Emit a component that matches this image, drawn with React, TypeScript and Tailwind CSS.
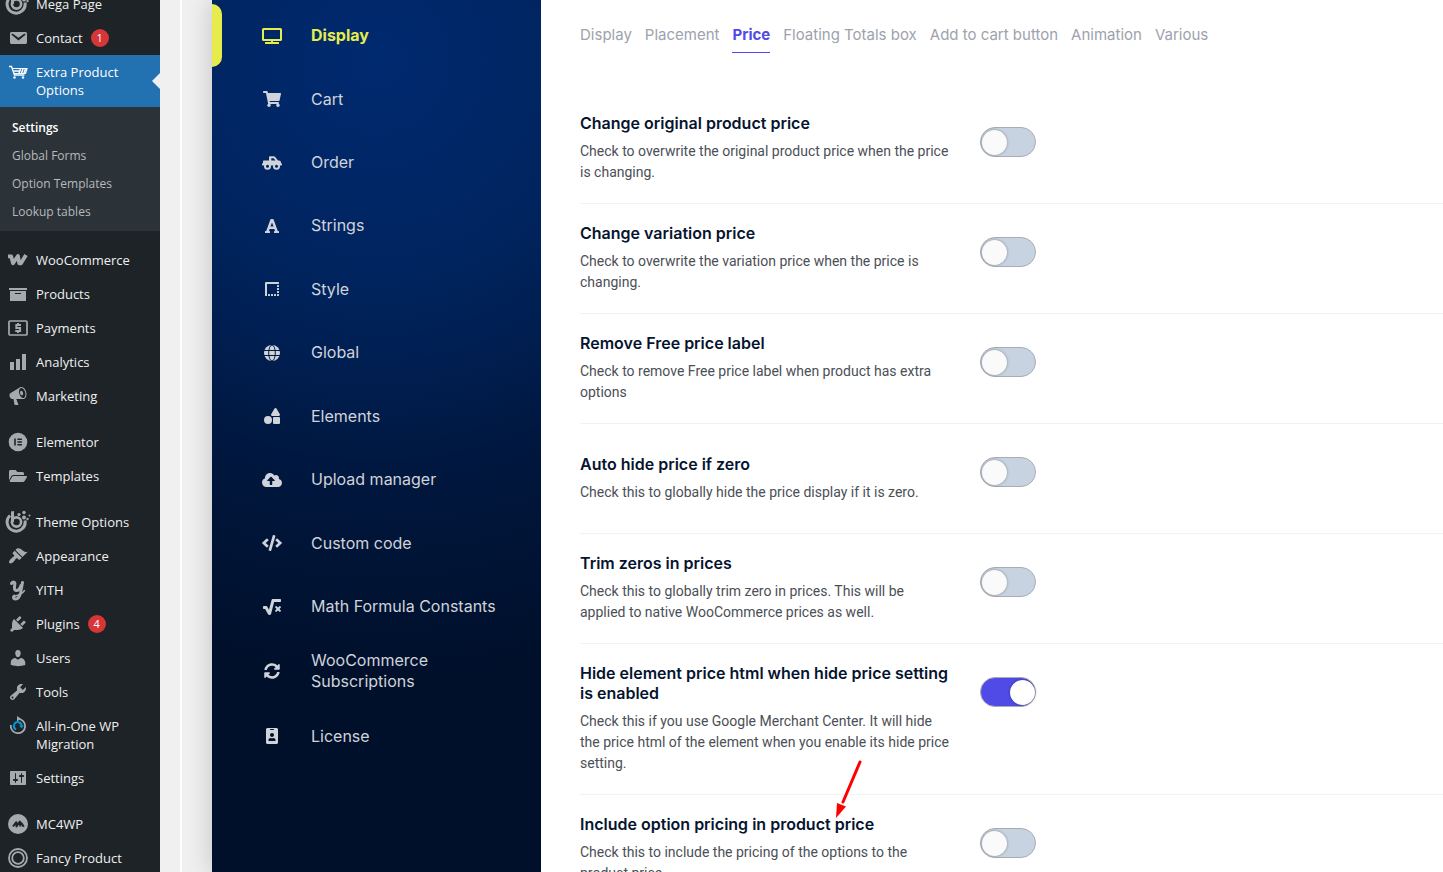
import { useState } from "react";
import type { ReactNode } from "react";
import {
    FaBorderStyle,
    FaCloudUploadAlt,
    FaCode,
    FaFolderOpen,
    FaFont,
    FaIdBadge,
    FaShapes,
    FaShoppingCart,
    FaSquareRootAlt,
    FaSyncAlt,
    FaTv,
} from "react-icons/fa";

// dashicons, 20x20 grid
const dash = {
    email: "M3.87 4h13.25C18.37 4 19 4.59 19 5.79v8.42c0 1.19-.63 1.79-1.88 1.79H3.87c-1.25 0-1.88-.6-1.88-1.79V5.79c0-1.2.63-1.79 1.88-1.79zm6.62 8.6l6.74-5.53c.24-.2.43-.66.13-1.07-.29-.41-.82-.42-1.17-.17l-5.7 3.86L4.8 5.83c-.35-.25-.88-.24-1.17.17-.3.41-.11.87.13 1.07z",
    archive: "M19 4v2H1V4h18zM2 7h16v10H2V7zm11 3V9H7v1h6z",
    chart: "M18 18V2h-4v16h4zm-6 0V7H8v11h4zm-6 0v-8H2v8h4z",
    megaphone: "M18.15 5.94c.46 1.62.38 3.22-.02 4.48-.42 1.28-1.26 2.18-2.3 2.48-.16.06-.26.06-.4.06-.06.02-.12.02-.18.02-.06.02-.14.02-.22.02h-6.8l2.22 5.5c.02.14-.06.26-.14.34-.08.1-.24.16-.34.16H6.95c-.1 0-.26-.06-.34-.16-.08-.08-.16-.2-.14-.34l-1-5.5H4.25l-.02-.02c-.5.06-1.08-.18-1.54-.62s-.88-1.08-1.06-1.88c-.24-.8-.2-1.56-.02-2.2.18-.62.58-1.08 1.06-1.3l.02-.02 9-5.4c.1-.06.18-.1.24-.16.06-.04.14-.08.24-.12.16-.08.28-.12.5-.18 1.04-.3 2.24.1 3.22.98s1.84 2.24 2.26 3.86zm-2.58 5.98h-.02c.4-.1.74-.34 1.04-.7.58-.7.86-1.76.86-3.04 0-.64-.1-1.3-.28-1.98-.34-1.36-1.02-2.5-1.78-3.24s-1.68-1.1-2.46-.88c-.82.22-1.4.96-1.7 2-.32 1.04-.28 2.36.06 3.72.38 1.36 1 2.5 1.8 3.24.78.74 1.62 1.1 2.48.88zm-2.54-7.08c.22-.04.42-.02.62.04.38.16.76.48 1.02 1s.42 1.2.42 1.78c0 .3-.04.56-.12.8-.18.48-.44.84-.86.94-.34.1-.8-.06-1.14-.4s-.64-.86-.78-1.5c-.18-.62-.12-1.24.02-1.72s.48-.84.82-.94z",
    appearance: "M14.48 11.06L7.41 3.99l1.5-1.5c.5-.56 2.3-.47 3.51.32 1.21.8 1.43 1.28 2.91 2.1 1.18.64 2.45 1.26 4.45.85zm-.71.71L6.7 4.7 4.93 6.47c-.39.39-.39 1.02 0 1.41l1.06 1.06c.39.39.39 1.03 0 1.42-.6.6-1.43 1.11-2.21 1.69-.35.26-.7.53-1.01.84C1.43 14.23.4 16.08 1.4 17.07c.99 1 2.84-.03 4.18-1.36.31-.31.58-.66.85-1.02.57-.78 1.08-1.61 1.69-2.21.39-.39 1.02-.39 1.41 0l1.06 1.06c.39.39 1.02.39 1.41 0z",
    plugins: "M13.11 4.36L9.87 7.6 8 5.73l3.24-3.24c.35-.34 1.05-.2 1.56.32.52.51.66 1.21.31 1.55zm-8 1.77l.91-1.12 9.01 9.01-1.19.84c-.71.71-2.63 1.16-3.82 1.16H6.14L4.9 17.26c-.59.59-1.54.59-2.12 0-.59-.58-.59-1.53 0-2.12l1.24-1.24v-3.88c0-1.13.4-3.19 1.09-3.89zm7.26 3.97l3.24-3.24c.34-.35 1.04-.21 1.55.31.52.51.66 1.21.31 1.55l-3.24 3.25z",
    users: "M10 9.25c-2.27 0-2.73-3.44-2.73-3.44C7 4.02 7.82 2 9.97 2c2.16 0 2.98 2.02 2.71 3.81 0 0-.41 3.44-2.68 3.44zm0 2.57L12.72 10c2.39 0 4.52 2.33 4.52 4.53v2.49s-3.65 1.13-7.24 1.13c-3.65 0-7.24-1.13-7.24-1.13v-2.49c0-2.25 1.94-4.48 4.47-4.48z",
    tools: "M16.68 9.77c-1.34 1.34-3.3 1.67-4.95.99l-5.41 6.52c-.99.99-2.59.99-3.58 0s-.99-2.59 0-3.57l6.52-5.42c-.68-1.65-.35-3.61.99-4.95 1.28-1.28 3.12-1.62 4.72-1.06l-2.89 2.89 2.82 2.82 2.86-2.87c.53 1.58.18 3.39-1.08 4.65zM3.81 16.21c.4.39 1.04.39 1.43 0 .4-.4.4-1.04 0-1.43-.39-.4-1.03-.4-1.43 0-.39.39-.39 1.03 0 1.43z",
    settings: "M18 16V4c0-.55-.45-1-1-1H3c-.55 0-1 .45-1 1v12c0 .55.45 1 1 1h14c.55 0 1-.45 1-1zM8 11h1c.55 0 1 .45 1 1s-.45 1-1 1H8v1.500c0 .28-.22.5-.5.5s-.5-.22-.5-.5V13H6c-.55 0-1-.45-1-1s.45-1 1-1h1V5.500c0-.28.22-.5.5-.5s.5.22.5.5V11zm5-2h-1c-.55 0-1-.45-1-1s.45-1 1-1h1V5.500c0-.28.22-.5.5-.5s.5.22.5.5V7h1c.55 0 1 .45 1 1s-.45 1-1 1h-1v5.500c0 .28-.22.5-.5.5s-.5-.22-.5-.5V9z",
};

function Dash({ d }: { d: string }) {
    return (
        <svg viewBox="0 0 20 20" className="size-5 fill-current">
            <path d={d} fillRule="evenodd" />
        </svg>
    );
}

function BrandIcon() {
    return (
        <svg viewBox="0 0 26 24" className="h-6 w-[26px] shrink-0 fill-current">
            <path d="M5 5.500A9 9 0 1 0 20 10.500" fill="none" stroke="currentColor" strokeWidth="3" />
            <path d="M6 1.500l3-.5v11H6z" />
            <circle cx="11.500" cy="12" r="4.600" fill="none" stroke="currentColor" strokeWidth="2.600" />
            <circle cx="11.500" cy="12" r="1.200" className="fill-[#1d2327]" />
            <circle cx="14" cy="4.500" r="1.600" />
            <circle cx="19" cy="2.500" r="1.700" />
            <circle cx="19" cy="7.500" r="2" />
            <circle cx="22.500" cy="9" r="1.200" />
            <circle cx="24.500" cy="5.500" r="1" />
        </svg>
    );
}

function ProductOptionsIcon() {
    return (
        <svg viewBox="0 0 20 16" className="h-4 w-5" fill="none" stroke="currentColor">
            <path d="M1 2.500h2.500l3 8.500h10" strokeWidth="1.400" />
            <path d="M4 4.500h15l-1.500 5H6" strokeWidth="1.200" />
            <path d="M6 7h5M11 9l1.500-4M13.500 9L15 5M16 9l1.500-4" strokeWidth="1.600" />
            <circle cx="6.500" cy="13.500" r="1.200" fill="currentColor" stroke="none" />
            <circle cx="15" cy="13.500" r="1.200" fill="currentColor" stroke="none" />
        </svg>
    );
}

function WooIcon() {
    return (
        <svg viewBox="0 0 20 12" className="h-3 w-5" fill="none" stroke="currentColor" strokeWidth="3.800" strokeLinejoin="round">
            <path d="M0 2.400h3.200L5 9.300 10 2 11.200 9.300 13 9.300 18 1" />
        </svg>
    );
}

function PaymentsIcon() {
    return (
        <svg viewBox="0 0 20 16" className="h-4 w-5" fill="none" stroke="currentColor">
            <rect x="1" y="1" width="18" height="14" rx="1" strokeWidth="1.700" />
            <path d="M13 5H8.300v3h3.800v3H7.200M10 3V5M10 11v2" strokeWidth="1.900" />
        </svg>
    );
}

function ElementorIcon() {
    return (
        <svg viewBox="0 0 20 20" className="size-5">
            <circle cx="10" cy="10" r="9.300" className="fill-current" />
            <path d="M6.200 6.500h1.600v7H6.200zM9.400 6.500h4.500v1.400H9.400zM9.400 9.300h4.500v1.400H9.400zM9.400 12.100h4.500v1.400H9.400z" className="fill-[#1d2327]" />
        </svg>
    );
}

function YithIcon() {
    return (
        <svg viewBox="0 0 18 22" className="h-[22px] w-[18px]" fill="none" stroke="currentColor" strokeLinecap="round" strokeLinejoin="round">
            <path d="M2.500 4.500C4 2.500 6.300 2.500 5.800 5.500 5.200 9 5 11.500 7.500 11.500c2 0 3.500-2 4.500-5" strokeWidth="3" />
            <path d="M13.500 3.500L11.500 14c-1 4.500-2.500 6-5 6-2.200 0-2.600-1.600-1.300-3" strokeWidth="3" />
            <path d="M6 17c3.500-.5 7.500-2.500 9.500-5.500" strokeWidth="1.400" />
        </svg>
    );
}

function MigrationIcon() {
    return (
        <svg viewBox="0 0 20 20" className="size-5" fill="none">
            <path d="M10 2.800A7.200 7.200 0 1 1 2.800 9" stroke="currentColor" strokeWidth="1.800" />
            <path d="M9 0v5.500l4-2.800z" className="fill-current" />
            <path d="M8 13.500A3.900 3.900 0 1 1 13.700 10" stroke="#0096d6" strokeWidth="2" />
            <path d="M11 9.500h5l-2.500 3z" fill="#0096d6" />
        </svg>
    );
}

function McIcon() {
    return (
        <svg viewBox="0 0 20 20" className="size-5" fill="none">
            <circle cx="10" cy="10" r="10" className="fill-current" />
            <path d="M5 12.500L8.300 8.200 8.500 12.500 11.800 7.500 12.500 12.500M13 8.500L15.800 12.800" stroke="#1d2327" strokeWidth="2" strokeLinejoin="round" />
        </svg>
    );
}

function RingsIcon() {
    return (
        <svg viewBox="0 0 20 20" className="size-5" fill="none" stroke="currentColor">
            <circle cx="10" cy="10" r="9" strokeWidth="1.800" />
            <circle cx="10" cy="10" r="5.800" strokeWidth="1.800" />
        </svg>
    );
}

// pickup with two hollow wheels
function TruckIcon({ className }: { className?: string }) {
    return (
        <svg viewBox="0 0 20 16" className={className} fill="currentColor">
            <path
                fillRule="evenodd"
                d="M7 2.500C7 1.700 7.500 1.200 8.300 1.200h3.400c.6 0 1.100.2 1.500.7L16 5.500h1c1.100 0 2 .9 2 2V8.300c.6 0 1 .5 1 1.100s-.4 1.100-1 1.100H1C.4 10.500 0 10 0 9.400s.4-1.100 1-1.100V6.500c0-.6.400-1 1-1h5zM9.300 3.200v2.300h4.200L11.600 3.200z"
            />
            <circle cx="5.500" cy="11.200" r="3.500" />
            <circle cx="14.500" cy="11.200" r="3.500" />
            <circle cx="5.500" cy="11.200" r="1.500" fill="#00225c" />
            <circle cx="14.500" cy="11.200" r="1.500" fill="#00225c" />
        </svg>
    );
}

function GlobeIcon({ className }: { className?: string }) {
    return (
        <svg viewBox="0 0 16 16" className={className}>
            <circle cx="8" cy="8" r="8" fill="currentColor" />
            <path d="M0 5.500h16M0 10.500h16" stroke="#001a46" strokeWidth="1" />
            <ellipse cx="8" cy="8" rx="3.300" ry="8" fill="none" stroke="#001a46" strokeWidth="1" />
        </svg>
    );
}

type AdminItem = { label: string; icon: ReactNode; count?: number };

const topItems: AdminItem[] = [
    { label: "Mega Page", icon: <BrandIcon /> },
    { label: "Contact", icon: <Dash d={dash.email} />, count: 1 },
];

const subItems = ["Settings", "Global Forms", "Option Templates", "Lookup tables"];

const adminGroups: AdminItem[][] = [
    [
        { label: "WooCommerce", icon: <WooIcon /> },
        { label: "Products", icon: <Dash d={dash.archive} /> },
        { label: "Payments", icon: <PaymentsIcon /> },
        { label: "Analytics", icon: <Dash d={dash.chart} /> },
        { label: "Marketing", icon: <Dash d={dash.megaphone} /> },
    ],
    [
        { label: "Elementor", icon: <ElementorIcon /> },
        { label: "Templates", icon: <FaFolderOpen className="size-[18px]" /> },
    ],
    [
        { label: "Theme Options", icon: <BrandIcon /> },
        { label: "Appearance", icon: <Dash d={dash.appearance} /> },
        { label: "YITH", icon: <YithIcon /> },
        { label: "Plugins", icon: <Dash d={dash.plugins} />, count: 4 },
        { label: "Users", icon: <Dash d={dash.users} /> },
        { label: "Tools", icon: <Dash d={dash.tools} /> },
        { label: "All-in-One WP Migration", icon: <MigrationIcon /> },
        { label: "Settings", icon: <Dash d={dash.settings} /> },
    ],
    [
        { label: "MC4WP", icon: <McIcon /> },
        { label: "Fancy Product Designer", icon: <RingsIcon /> },
    ],
];

const navItems = [
    { label: "Display", icon: FaTv },
    { label: "Cart", icon: FaShoppingCart },
    { label: "Order", icon: TruckIcon },
    { label: "Strings", icon: FaFont },
    { label: "Style", icon: FaBorderStyle },
    { label: "Global", icon: GlobeIcon },
    { label: "Elements", icon: FaShapes },
    { label: "Upload manager", icon: FaCloudUploadAlt },
    { label: "Custom code", icon: FaCode },
    { label: "Math Formula Constants", icon: FaSquareRootAlt },
    { label: "WooCommerce Subscriptions", icon: FaSyncAlt },
    { label: "License", icon: FaIdBadge },
];

const tabs = ["Display", "Placement", "Price", "Floating Totals box", "Add to cart button", "Animation", "Various"];

const options = [
    { id: "original", title: "Change original product price", text: "Check to overwrite the original product price when the price is changing." },
    { id: "variation", title: "Change variation price", text: "Check to overwrite the variation price when the price is changing." },
    { id: "free", title: "Remove Free price label", text: "Check to remove Free price label when product has extra options" },
    { id: "autohide", title: "Auto hide price if zero", text: "Check this to globally hide the price display if it is zero." },
    { id: "trim", title: "Trim zeros in prices", text: "Check this to globally trim zero in prices. This will be applied to native WooCommerce prices as well." },
    { id: "hidehtml", title: "Hide element price html when hide price setting is enabled", text: "Check this if you use Google Merchant Center. It will hide the price html of the element when you enable its hide price setting." },
    { id: "include", title: "Include option pricing in product price", text: "Check this to include the pricing of the options to the product price." },
];

function AdminLink({ item }: { item: AdminItem }) {
    return (
        <li>
            <a href="#" className="flex text-[#f0f0f1]">
                <span className="flex h-[34px] w-9 shrink-0 items-center justify-center text-[#a7aaad]">{item.icon}</span>
                <span className="py-2 pr-2">{item.label}</span>
                {item.count && (
                    <span className="mt-2 flex size-[18px] items-center justify-center rounded-full bg-[#d63638] text-[11px] text-white">
                        {item.count}
                    </span>
                )}
            </a>
        </li>
    );
}

function AdminMenu() {
    return (
        <nav className="w-40 shrink-0 overflow-hidden bg-[#1d2327] font-['Open_Sans',sans-serif] text-[13px] leading-[18px]">
            <ul className="-mt-[13px]">
                {topItems.map((item) => (
                    <AdminLink key={item.label} item={item} />
                ))}
                <li>
                    <a href="#" className="relative flex bg-[#2271b1] text-white">
                        <span className="flex h-[34px] w-9 shrink-0 items-center justify-center">
                            <ProductOptionsIcon />
                        </span>
                        <span className="py-2 pr-6">Extra Product Options</span>
                        <span className="absolute top-1/2 right-0 -translate-y-1/2 border-y-8 border-r-8 border-y-transparent border-r-[#f0f0f1]" />
                    </a>
                    <ul className="bg-[#2c3338] px-3 pt-[7px] pb-[5px] text-[12px]">
                        {subItems.map((label, i) => (
                            <li key={label}>
                                <a href="#" className={i === 0 ? "block py-[5px] font-semibold text-white" : "block py-[5px] text-[#b6babd]"}>
                                    {label}
                                </a>
                            </li>
                        ))}
                    </ul>
                </li>
            </ul>
            {adminGroups.map((group, i) => (
                <ul key={i} className="mt-3">
                    {group.map((item) => (
                        <AdminLink key={item.label} item={item} />
                    ))}
                </ul>
            ))}
        </nav>
    );
}

function SectionNav() {
    const [active, setActive] = useState("Display");

    return (
        <nav className="w-[329px] shrink-0 bg-[radial-gradient(circle_620px_at_50%_60px,#002a70_0%,#00235c_38%,#00163c_70%,#00102b_100%)] pt-1 shadow-[0_0_25px_rgba(0,0,0,0.2)]">
            <ul className="flex min-h-[764px] flex-col">
                {navItems.map(({ label, icon: Icon }) => {
                    const on = label === active;
                    return (
                        <li key={label} className="flex flex-auto">
                            <button
                                type="button"
                                onClick={() => setActive(label)}
                                className={
                                    "relative flex min-h-[63px] w-full items-center py-3 pr-8 pl-[50px] text-left text-[16px] leading-[21px] " +
                                    (on ? "font-bold text-[#e6ec4c]" : "text-[#d0d3da]")
                                }
                            >
                                {on && <span className="absolute inset-y-0 left-0 w-2.5 rounded-r-[10px] bg-[#e6ec4c]" />}
                                <Icon className="h-4 w-5 shrink-0" />
                                <span className="pl-[29px]">{label}</span>
                            </button>
                        </li>
                    );
                })}
            </ul>
        </nav>
    );
}

function OptionRow({ id, title, text }: { id: string; title: string; text: string }) {
    return (
        <div className="flex min-h-[110px] gap-7 border-b border-[#f1f2f4]">
            <div className="flex w-[372px] flex-col justify-center gap-2 pt-[19px] pb-5">
                <label htmlFor={id} className="text-[16px] leading-5 font-semibold text-[#06142f]">
                    {title}
                </label>
                <p id={id + "-text"} className="font-[Roboto,sans-serif] text-[14px] leading-[21px] text-[#4b4f56]">
                    {text}
                </p>
            </div>
            <input
                id={id}
                type="checkbox"
                aria-describedby={id + "-text"}
                defaultChecked={id === "hidehtml"}
                className="mt-[33px] flex h-[30px] w-14 appearance-none items-center rounded-full border border-[#a9adb3] bg-[#c8d3e1] px-px before:size-[25px] before:rounded-full before:bg-[#fafafa] before:shadow-[0_0_3px_rgba(0,0,0,0.35)] checked:justify-end checked:bg-[#504be6] checked:px-0 checked:before:bg-white"
            />
        </div>
    );
}

export default function App() {
    const [tab, setTab] = useState("Price");

    return (
        <div className="flex h-screen overflow-hidden bg-[#f0f0f1] font-[Inter,sans-serif]">
            <AdminMenu />

            <div className="ml-5 flex min-w-0 flex-1 border-l-2 border-white pl-[30px]">
                <SectionNav />

                <main className="relative min-w-0 flex-1 overflow-hidden bg-white pl-[39px]">
                    {/* TABS */}
                    <div role="tablist" className="flex gap-[13px] pt-[18px]">
                        {tabs.map((label) => (
                            <button
                                key={label}
                                type="button"
                                role="tab"
                                aria-selected={label === tab}
                                onClick={() => setTab(label)}
                                className={
                                    "h-[35px] border-b text-[15px] " +
                                    (label === tab ? "border-[#504be6] font-bold text-[#504be6]" : "border-transparent text-[#9da2ad]")
                                }
                            >
                                {label}
                            </button>
                        ))}
                    </div>

                    {/* OPTIONS */}
                    <div className="pt-[41px]">
                        {options.map((option) => (
                            <OptionRow key={option.id} {...option} />
                        ))}
                    </div>

                    {/* pointer to the last option */}
                    <svg viewBox="0 0 26 60" className="absolute top-[760px] left-[295px] h-[60px] w-[26px]">
                        <path d="M24 2L7 42" stroke="#ff0000" strokeWidth="3" strokeLinecap="round" />
                        <path d="M0 58L1 43 10 46.500z" fill="#ff0000" />
                    </svg>
                </main>
            </div>
        </div>
    );
}
